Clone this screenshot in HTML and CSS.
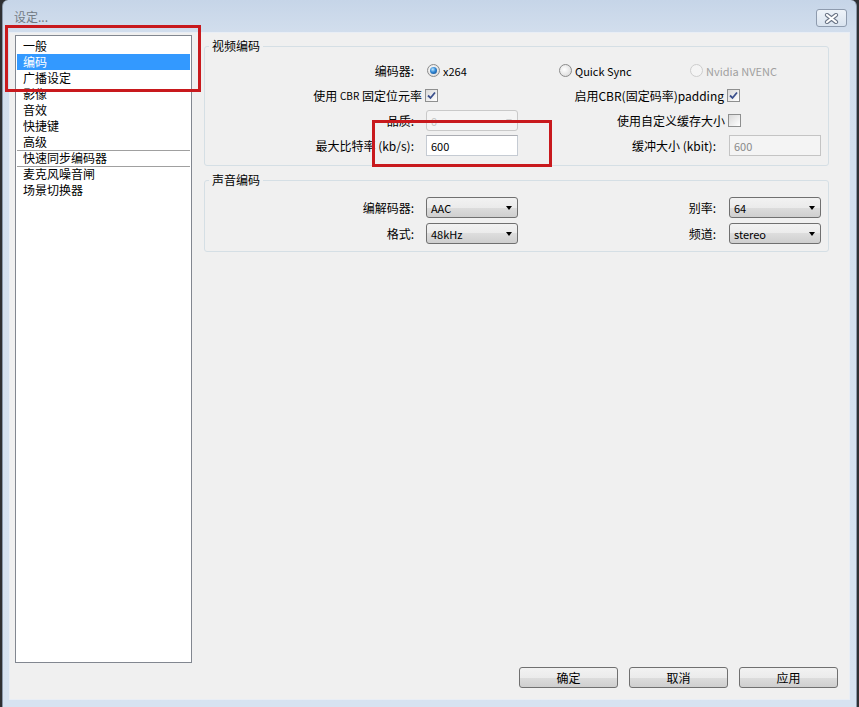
FILE: index.html
```html
<!DOCTYPE html>
<html lang="zh-CN">
<head>
    <meta charset="UTF-8">
    <title>设定...</title>
    <link rel="stylesheet" href="styles.css">
</head>
<body>
    <div class="window">
        <div class="titlebar">
            <span class="title">设定...</span>
            <span class="close">
                <svg width="15" height="11" viewBox="0 0 15 11">
                    <path d="M3 2 L12 9 M12 2 L3 9" stroke="#6a7486" stroke-width="4.2" stroke-linecap="round"/>
                    <path d="M3 2 L12 9 M12 2 L3 9" stroke="#ffffff" stroke-width="2.2" stroke-linecap="round"/>
                </svg>
            </span>
        </div>

        <div class="client">
            <ul class="nav">
                <li>一般</li>
                <li class="active">编码</li>
                <li>广播设定</li>
                <li>影像</li>
                <li>音效</li>
                <li>快捷键</li>
                <li>高级</li>
                <li class="sep">快速同步编码器</li>
                <li class="sep">麦克风噪音闸</li>
                <li>场景切换器</li>
            </ul>

            <div class="main">
                <fieldset class="group">
                    <legend>视频编码</legend>
                    <div class="form">
                        <div class="lbl">编码器:</div>
                        <div class="ctl">
                            <span class="opt"><span class="radio on"></span>x264</span>
                        </div>
                        <div class="radios">
                            <span class="opt quick"><span class="radio"></span>Quick Sync</span>
                            <span class="opt off"><span class="radio dis"></span>Nvidia NVENC</span>
                        </div>

                        <div class="chk-left">使用&nbsp;<span class="small">CBR</span>&nbsp;固定位元率<span class="check on"><svg width="11" height="11" viewBox="0 0 11 11"><path d="M2 5.5 L4.5 8 L9 2.5" fill="none" stroke="#3a4f8c" stroke-width="1.8"/></svg></span></div>
                        <div class="chk-right">启用CBR(固定码率)padding<span class="check on"><svg width="11" height="11" viewBox="0 0 11 11"><path d="M2 5.5 L4.5 8 L9 2.5" fill="none" stroke="#3a4f8c" stroke-width="1.8"/></svg></span></div>

                        <div class="lbl">品质:</div>
                        <div class="ctl"><span class="select disabled">0<span class="arrow"></span></span></div>
                        <div class="chk-right wide">使用自定义缓存大小<span class="check"></span></div>

                        <div class="lbl">最大比特率 (kb/s):</div>
                        <div class="ctl"><span class="input">600</span></div>
                        <div class="lbl right">缓冲大小 (kbit):</div>
                        <div class="ctl"><span class="input disabled">600</span></div>
                    </div>
                </fieldset>

                <fieldset class="group audio">
                    <legend>声音编码</legend>
                    <div class="form">
                        <div class="lbl">编解码器:</div>
                        <div class="ctl"><span class="select">AAC<span class="arrow"></span></span></div>
                        <div class="lbl right">别率:</div>
                        <div class="ctl"><span class="select">64<span class="arrow"></span></span></div>

                        <div class="lbl">格式:</div>
                        <div class="ctl"><span class="select">48kHz<span class="arrow"></span></span></div>
                        <div class="lbl right">频道:</div>
                        <div class="ctl"><span class="select">stereo<span class="arrow"></span></span></div>
                    </div>
                </fieldset>

                <div class="buttons">
                    <span class="btn">确定</span>
                    <span class="btn">取消</span>
                    <span class="btn">应用</span>
                </div>
            </div>
        </div>

        <!-- red annotation frames drawn over the dialog -->
        <div class="mark mark-nav"></div>
        <div class="mark mark-rate"></div>
    </div>
</body>
</html>
```

FILE: styles.css
```css
* {
    box-sizing: border-box;
}

html,
body {
    margin: 0;
    padding: 0;
    width: 859px;
    height: 707px;
    overflow: hidden;
    background: #2f3033;
    font-family: "Noto Sans CJK SC", "Liberation Sans", sans-serif;
    font-size: 12px;
    color: #000;
}

.window {
    position: relative;
    display: flex;
    flex-direction: column;
    width: 855px;
    height: 707px;
    margin-left: 2px;
    border-radius: 6px 6px 0 0;
    border-left: 1px solid #8a98aa;
    border-right: 1px solid #8a98aa;
    background: linear-gradient(#c6d5e8 0, #d2deed 33px, #d7e3f1 100%);
}

.titlebar {
    display: flex;
    justify-content: space-between;
    align-items: flex-start;
    height: 33px;
    padding: 9px 9px 0 11px;
}

.title {
    line-height: 16px;
    color: #717982;
}

.close {
    display: flex;
    align-items: center;
    justify-content: center;
    width: 31px;
    height: 18px;
    border: 1px solid #8e9bae;
    border-radius: 3px;
    background: linear-gradient(#eef3f9, #d9e3ef);
}

.client {
    display: flex;
    height: 666px;
    margin: 0 7px 8px 7px;
    padding: 2px 0 0 5px;
    background: #f0f0f0;
    box-shadow: 0 0 0 1px #e9eef5;
}

/* left list */
.nav {
    width: 177px;
    height: 628px;
    margin: 0;
    padding: 2px 1px;
    list-style: none;
    background: #fff;
    border: 1px solid #828790;
}

.nav li {
    height: 16px;
    padding-left: 6px;
    line-height: 16px;
    white-space: nowrap;
}

.nav li.active {
    background: #3399ff;
    color: #fff;
}

.nav li.sep {
    background: linear-gradient(#a0a0a0, #a0a0a0) top / 100% 1px no-repeat;
}

/* right side */
.main {
    display: flex;
    flex-direction: column;
    flex: 1;
    padding: 3px 11px 11px 12px;
}

.group {
    width: 625px;
    margin: 0;
    padding: 6px 0 9px 0;
    border: 1px solid #d5dfe5;
    border-radius: 3px;
    min-inline-size: 0;
}

.group legend {
    margin-left: 4px;
    padding: 0 3px;
    line-height: 16px;
}

.group.audio {
    margin-top: 6px;
    padding: 9px 0 7px 0;
}

.form {
    display: grid;
    grid-template-columns: 221px 92px 211px 92px;
    grid-auto-rows: 21px;
    row-gap: 4px;
}

.audio .form {
    row-gap: 5px;
}

.lbl {
    display: flex;
    align-items: center;
    justify-content: flex-end;
    padding-right: 12px;
    white-space: nowrap;
}

.lbl.right {
    padding-right: 13px;
}

.ctl {
    display: flex;
    align-items: center;
}

.radios {
    grid-column: 3 / 5;
    display: flex;
    align-items: center;
    padding-left: 41px;
}

.opt {
    display: flex;
    align-items: center;
    gap: 3px;
    font-size: 11px;
    white-space: nowrap;
}

.ctl .opt {
    margin-left: 1px;
}

.opt.quick {
    width: 131px;
}

.opt.off {
    color: #a0a0a0;
}

.radio {
    position: relative;
    flex: none;
    width: 13px;
    height: 13px;
    border: 1px solid #8b8b8b;
    border-radius: 50%;
    background: radial-gradient(circle at 40% 40%, #ffffff, #d4d4d4);
}

.radio.on::after {
    content: "";
    position: absolute;
    top: 2px;
    left: 2px;
    width: 7px;
    height: 7px;
    border-radius: 50%;
    background: radial-gradient(circle at 40% 35%, #bfe8ff 0, #2f86d4 45%, #0d3f7c 100%);
}

.radio.dis {
    border-color: #cdcdcd;
    background: #f4f4f4;
}

.chk-left,
.chk-right {
    display: flex;
    align-items: center;
    justify-content: flex-end;
    white-space: nowrap;
}

.chk-left {
    grid-column: 1 / 3;
    padding-right: 80px;
}

.chk-right {
    grid-column: 3 / 5;
    padding-right: 81px;
}

.chk-right.wide {
    padding-right: 80px;
}

.small {
    font-size: 10px;
}

.check {
    display: flex;
    align-items: center;
    justify-content: center;
    flex: none;
    width: 13px;
    height: 13px;
    margin-left: 3px;
    border: 1px solid #8e8f8f;
    background: linear-gradient(135deg, #d9d9d9, #ffffff);
}

.select,
.input {
    position: relative;
    display: flex;
    align-items: center;
    width: 92px;
    height: 21px;
    padding-left: 4px;
    font-size: 11px;
}

.select {
    border: 1px solid #707070;
    border-radius: 3px;
    background: linear-gradient(#f2f2f2 0, #ebebeb 50%, #dddddd 50%, #cfcfcf 100%);
}

.select .arrow {
    position: absolute;
    right: 5px;
    top: 8px;
    border-left: 3.5px solid transparent;
    border-right: 3.5px solid transparent;
    border-top: 4px solid #000;
}

.select.disabled {
    border-color: #c9c9c9;
    background: #f4f4f4;
    color: #c4c4c4;
}

.select.disabled .arrow {
    border-top-color: #d0d0d0;
}

.input {
    border: 1px solid #c5cbd3;
    border-top-color: #abadb3;
    background: #fff;
}

.input.disabled {
    border-color: #c4c4c4;
    background: #f4f4f4;
    color: #8a8a8a;
}

.buttons {
    display: flex;
    justify-content: flex-end;
    gap: 11px;
    margin-top: auto;
}

.btn {
    display: flex;
    align-items: center;
    justify-content: center;
    width: 99px;
    height: 21px;
    border: 1px solid #707070;
    border-radius: 3px;
    background: linear-gradient(#f2f2f2 0, #ebebeb 50%, #dddddd 50%, #cfcfcf 100%);
}

/* annotation overlay */
.mark {
    position: absolute;
    border: 3px solid #c8191d;
}

.mark-nav {
    left: 2px;
    top: 25px;
    width: 196px;
    height: 67px;
}

.mark-rate {
    left: 369px;
    top: 120px;
    width: 180px;
    height: 47px;
}
```
